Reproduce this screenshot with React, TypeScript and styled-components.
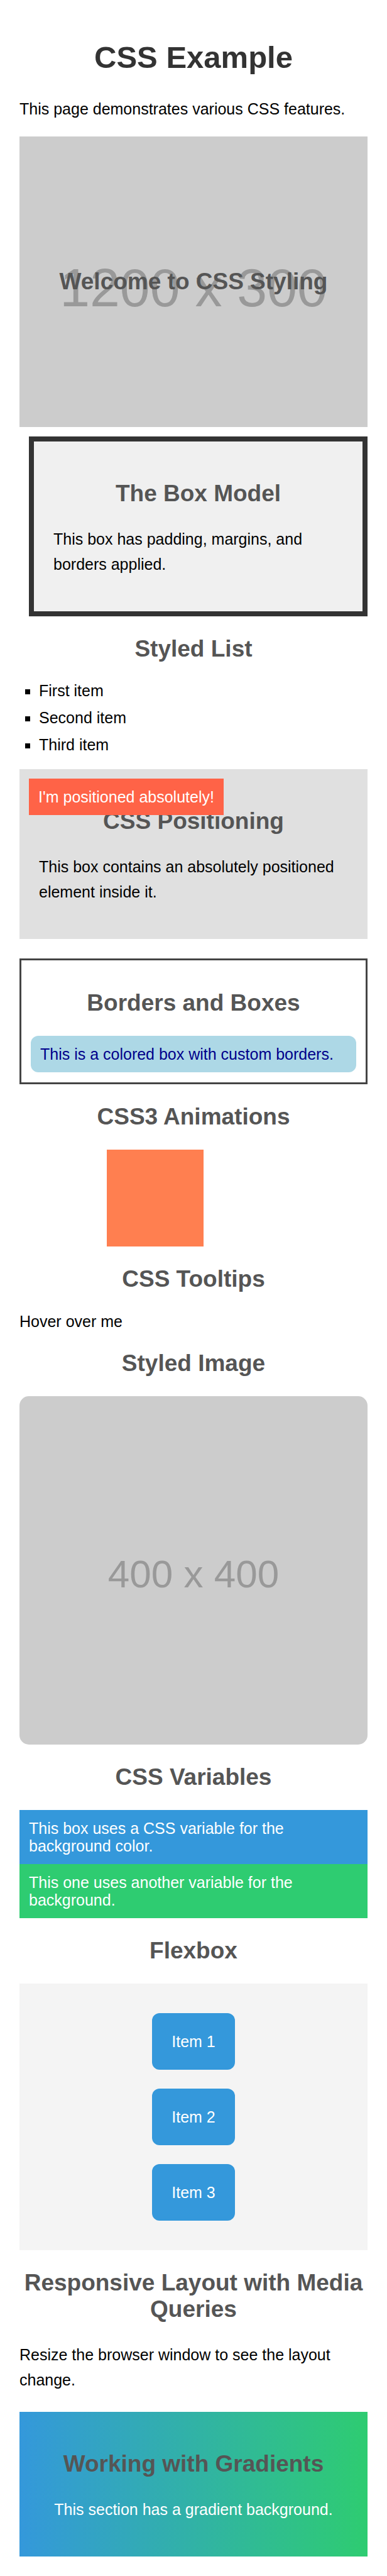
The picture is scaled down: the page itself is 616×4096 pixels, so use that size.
import React from "react";
import styled, { createGlobalStyle } from "styled-components";

const colors = {
  primary: "#3498db",
  secondary: "#2ecc71",
  heading: "#555",
  placeholder: "#ccc",
  placeholderText: "#999",
};

const GlobalStyle = createGlobalStyle`
  *, *::before, *::after {
    box-sizing: border-box;
  }
  body {
    margin: 0;
    background: #fff;
    color: #000;
    font-family: "Liberation Sans", Arial, sans-serif;
    font-size: 25px;
    line-height: 28px;
  }
`;

const Page = styled.main`
  display: flow-root;
  padding: 31px;
`;

const Title = styled.h1`
  margin: 32px 0 34px;
  color: #333;
  font-size: 49px;
  line-height: 56px;
  text-align: center;
`;

const Heading = styled.h2`
  margin: 31px 0;
  color: ${colors.heading};
  font-size: 37px;
  line-height: 42px;
  text-align: center;
`;

const Text = styled.p`
  margin: 24px 0;
  line-height: 40px;
`;

const Hero = styled.section`
  position: relative;
  display: flex;
  align-items: center;
  justify-content: center;
  height: 462px;
  background: ${colors.placeholder};
`;

const HeroHeading = styled(Heading)`
  position: relative;
  margin: 0;
`;

const HeroLabel = styled.span`
  position: absolute;
  inset: 0;
  display: flex;
  align-items: center;
  justify-content: center;
  padding-top: 18px;
  color: ${colors.placeholderText};
  font-size: 86px;
  line-height: 86px;
  white-space: nowrap;
`;

const ModelBox = styled.section`
  display: flow-root;
  margin: 15px 0 0 15px;
  padding: 31px;
  border: 8px solid #333;
  background: #f0f0f0;
`;

const List = styled.ul`
  display: flex;
  flex-direction: column;
  gap: 15px;
  margin: 0 0 25px;
  padding-left: 31px;
  list-style: square;
`;

const PositionedBox = styled.section`
  position: relative;
  display: flow-root;
  margin-bottom: 31px;
  padding: 31px;
  background: #e0e0e0;
`;

const Tag = styled.div`
  position: absolute;
  top: 15px;
  left: 15px;
  padding: 15px;
  background: #ff6347;
  color: #fff;
`;

const BorderedBox = styled.section`
  display: flow-root;
  padding: 16px 15px;
  border: 3px solid #444;
`;

const RoundedBox = styled.div`
  padding: 15px;
  border-radius: 12px;
  background: #add8e6;
  color: #00008b;
`;

const Square = styled.div`
  width: 154px;
  height: 154px;
  margin-left: 139px;
  background: #ff7f50;
`;

const HoverText = styled.div`
  line-height: 30px;
`;

const Picture = styled.div`
  display: flex;
  align-items: center;
  justify-content: center;
  aspect-ratio: 1;
  padding-top: 11px;
  border-radius: 15px;
  background: ${colors.placeholder};
  color: ${colors.placeholderText};
  font-size: 62px;
  line-height: 62px;
`;

const ColorBox = styled.div<{ $color: string }>`
  padding: 15px;
  background: ${(p) => p.$color};
  color: #fff;
`;

const FlexPanel = styled.div`
  display: flex;
  flex-direction: column;
  align-items: center;
  gap: 30px;
  padding: 47px;
  background: #f4f4f4;
`;

const FlexItem = styled.div`
  padding: 31px;
  border-radius: 12px;
  background: ${colors.primary};
  color: #fff;
`;

const GradientBox = styled.section`
  display: flow-root;
  margin-top: 31px;
  padding: 31px;
  background: linear-gradient(to right, ${colors.primary}, ${colors.secondary});
  color: #fff;
  text-align: center;
`;

export default function App() {
  return (
    <>
      <GlobalStyle />
      <Page>
        <Title>CSS Example</Title>
        <Text>This page demonstrates various CSS features.</Text>

        <Hero>
          <HeroLabel>1200 x 300</HeroLabel>
          <HeroHeading>Welcome to CSS Styling</HeroHeading>
        </Hero>

        <ModelBox>
          <Heading>The Box Model</Heading>
          <Text>This box has padding, margins, and borders applied.</Text>
        </ModelBox>

        <Heading>Styled List</Heading>
        <List>
          <li>First item</li>
          <li>Second item</li>
          <li>Third item</li>
        </List>

        <PositionedBox>
          <Heading>CSS Positioning</Heading>
          <Text>This box contains an absolutely positioned element inside it.</Text>
          <Tag>I'm positioned absolutely!</Tag>
        </PositionedBox>

        <BorderedBox>
          <Heading>Borders and Boxes</Heading>
          <RoundedBox>This is a colored box with custom borders.</RoundedBox>
        </BorderedBox>

        <Heading>CSS3 Animations</Heading>
        <Square />

        <Heading>CSS Tooltips</Heading>
        <HoverText>Hover over me</HoverText>

        <Heading>Styled Image</Heading>
        <Picture>400 x 400</Picture>

        <Heading>CSS Variables</Heading>
        <ColorBox $color={colors.primary}>
          This box uses a CSS variable for the background color.
        </ColorBox>
        <ColorBox $color={colors.secondary}>
          This one uses another variable for the background.
        </ColorBox>

        <Heading>Flexbox</Heading>
        <FlexPanel>
          <FlexItem>Item 1</FlexItem>
          <FlexItem>Item 2</FlexItem>
          <FlexItem>Item 3</FlexItem>
        </FlexPanel>

        <Heading>Responsive Layout with Media Queries</Heading>
        <Text>Resize the browser window to see the layout change.</Text>

        <GradientBox>
          <Heading>Working with Gradients</Heading>
          <Text>This section has a gradient background.</Text>
        </GradientBox>
      </Page>
    </>
  );
}
